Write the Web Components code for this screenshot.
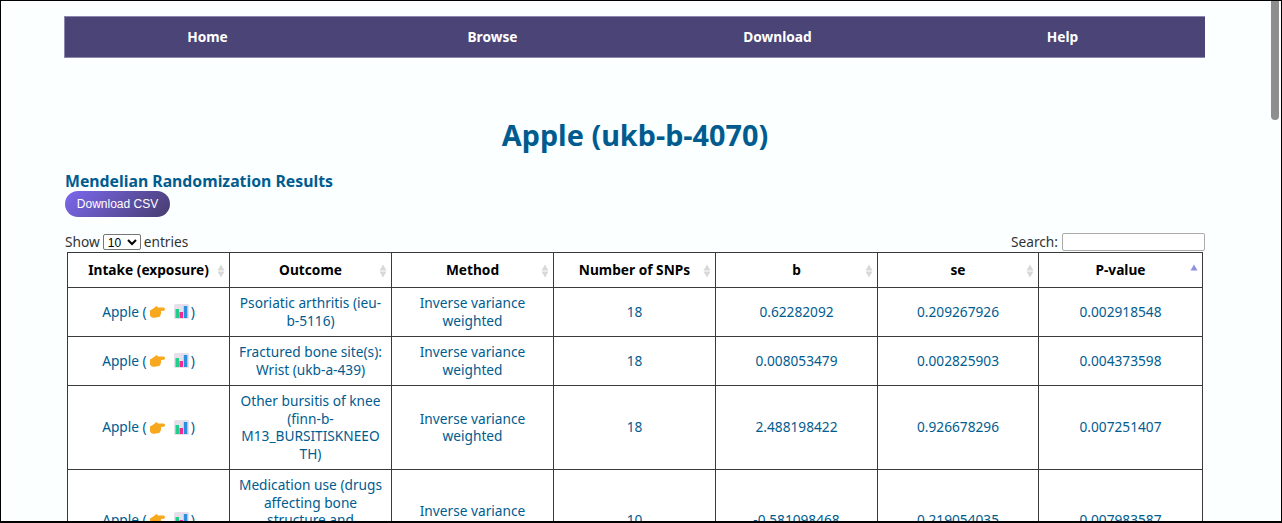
<!DOCTYPE html>
<html lang="en"><head><meta charset="utf-8"><title>Apple (ukb-b-4070)</title>
<style>
html,body{margin:0;padding:0;height:100%;overflow:hidden;background:#fbffff}
body{font-family:"Noto Sans","Open Sans",sans-serif;font-size:13.7px;color:#333}
</style></head><body>
<app-frame>
  <app-nav><a>Home</a><a>Browse</a><a>Download</a><a>Help</a></app-nav>
  <page-title>Apple (ukb-b-4070)</page-title>
  <section-head>Mendelian Randomization Results</section-head>
  <csv-button>Download CSV</csv-button>
  <table-tools></table-tools>
  <mr-table></mr-table>
</app-frame>
<script>
const def=(name,css,html)=>customElements.define(name,class extends HTMLElement{
  constructor(){super();this.attachShadow({mode:'open'}).innerHTML=`<style>${css}</style>${html}`}
});
def('app-frame',`:host{display:block;box-sizing:border-box;height:523px;overflow:hidden;position:relative;border:solid #000;border-width:1px 1px 2px 1px;padding:14.5px 76px 0 64px;background:#fbffff}
.sb{position:absolute;right:2px;top:0;width:8px;height:119px;background:#8e8e8e;border-radius:0 0 4px 4px}`,`<slot></slot><div class="sb"></div>`);
def('app-nav',`:host{display:grid;grid-template-columns:repeat(4,1fr);height:42px;box-sizing:border-box;background:#4a4477;border:1px solid #8b87ad;border-width:1px 0 1px 1px;margin-left:-1px}
::slotted(a){color:#fff;font-weight:700;font-size:13.7px;display:flex;align-items:center;justify-content:center}`,`<slot></slot>`);
def('page-title',`:host{display:block;margin-top:58px;text-align:center;font-size:28.8px;font-weight:700;line-height:38px;color:#005c8f}`,`<slot></slot>`);
def('section-head',`:host{display:block;margin-top:15px;font-size:15.8px;font-weight:700;line-height:24px;color:#005c8f}`,`<slot></slot>`);
def('csv-button',`:host{display:block;margin-top:-2px}
button{display:block;width:105px;height:26px;border:0;padding:0;border-radius:13px;background:linear-gradient(135deg,#7b68ee,#483d6f);color:#fff;font:12px "Liberation Sans",Arial,sans-serif}`,`<button><slot></slot></button>`);
def('table-tools',`:host{display:flex;justify-content:space-between;align-items:center;margin-top:15px;height:20px;color:#333}
label{display:flex;align-items:center;gap:3px}
select{width:38px;height:16px;font:12px "Liberation Sans",Arial,sans-serif;padding:0;background:#fff;border:1px solid #767676;border-radius:2px}
input{box-sizing:border-box;width:143px;height:18px;padding:1px 2px;border:1px solid #aaa;border-radius:2px;background:#fff;margin:0 0 0 1px}`,
`<label>Show <select><option>10</option></select> entries</label><label>Search: <input type="search"></label>`);
const hand=`<svg width="15" height="12" viewBox="0 0 15 12"><path fill="#f7a81e" d="M0 4.6 3 2.8C4 2 5 .8 6.6 0L8 1.6 13.6 1.6C15.4 1.8 15.4 4.6 13.6 4.8L10.8 5C11.3 5.8 11.3 6.6 10.9 7.1 11.2 7.9 10.9 8.7 10.3 9 10.4 10 9.7 10.8 8.8 10.9L4.8 11.8C2.6 12 .6 11 0 9.4Z"/></svg>`;
const chart=`<svg width="15" height="15" viewBox="0 0 15 15"><rect width="15" height="15" rx="1.5" fill="#e6e0ea"/><rect x="1.5" y="5" width="3.5" height="9" fill="#1fd08a"/><rect x="5.5" y="8" width="3.5" height="6" fill="#f02a92"/><rect x="9.8" y="2" width="3.5" height="12" fill="#2b8fe0"/></svg>`;
const rows=[
['Psoriatic arthritis (ieu-b-5116)','18','0.62282092','0.209267926','0.002918548'],
['Fractured bone site(s): Wrist (ukb-a-439)','18','0.008053479','0.002825903','0.004373598'],
['Other bursitis of knee (finn-b-M13_BURSITISKNEEOTH)','18','2.488198422','0.926678296','0.007251407'],
['Medication use (drugs affecting bone structure and mineralization) (ukb-b-9265)','10','-0.581098468','0.219054035','0.007983587']];
const heads=['Intake (exposure)','Outcome','Method','Number of SNPs','b','se','P-value'];
const sort=(on)=>`<svg class="s" width="8" height="14" viewBox="0 0 8 14">${on?'<path d="M.5 6.5 4 .5 7.5 6.5Z" fill="#8f8fe0"/>':'<path d="M.5 6.5 4 .5 7.5 6.5Z" fill="#d8d8d8"/><path d="M.5 7.5 4 13.5 7.5 7.5Z" fill="#d8d8d8"/>'}</svg>`;
def('mr-table',`:host{display:block;margin:0 0 0 2px}
table{border-collapse:collapse;table-layout:fixed;width:1136px;background:#fff}
th,td{border:1px solid #3a3a3a;text-align:center;vertical-align:middle;overflow-wrap:anywhere;line-height:17.5px;padding:6.5px 8px}
th{color:#000;font-weight:700;position:relative;padding:8.5px 10px 8px}
td{color:#005c8f}
.s{position:absolute;right:4px;top:11px}
.a{display:inline-flex;align-items:center;white-space:nowrap}
.a svg{margin:1px 2px 0 3px;flex:none}
.a svg+svg{margin:0 2px 0 7px}`,
`<table><colgroup><col style="width:162px"><col style="width:162px"><col style="width:162px"><col style="width:162px"><col style="width:162px"><col style="width:161px"><col style="width:164px"></colgroup>
<thead><tr>${heads.map((h,i)=>`<th>${h}${sort(i==6)}</th>`).join('')}</tr></thead>
<tbody>${rows.map(r=>`<tr><td><span class="a">Apple (${hand}${chart})</span></td><td>${r[0]}</td><td>Inverse variance weighted</td><td>${r[1]}</td><td>${r[2]}</td><td>${r[3]}</td><td>${r[4]}</td></tr>`).join('')}</tbody></table>`);
</script>
</body></html>
